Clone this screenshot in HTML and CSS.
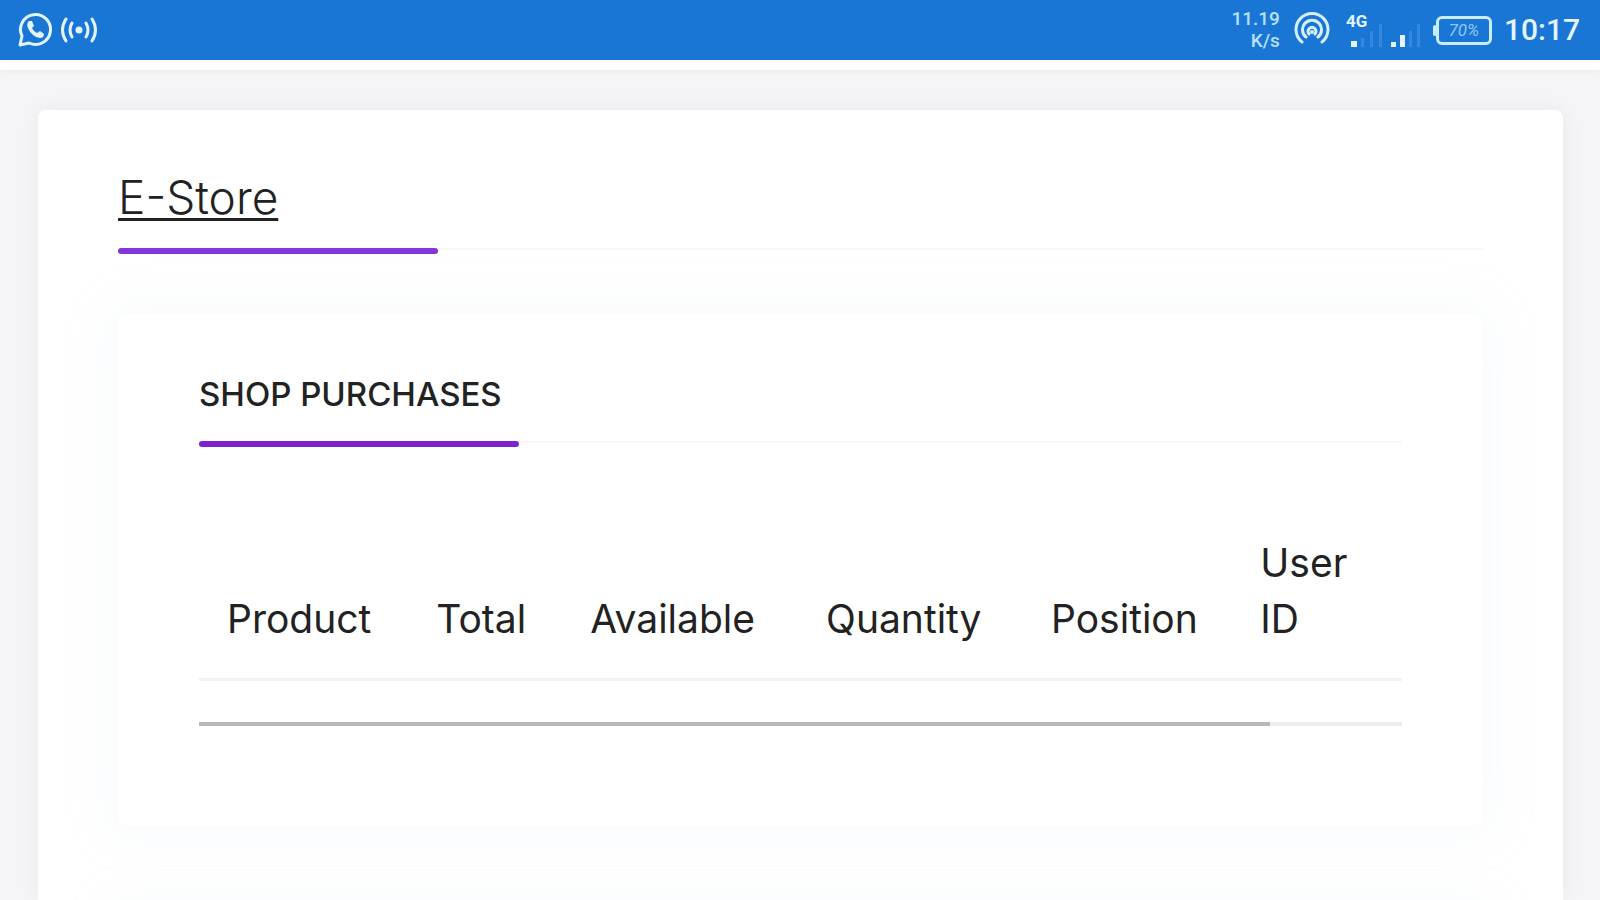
FILE: index.html
```
<!DOCTYPE html>
<html lang="en">
<head>
<meta charset="utf-8">
<meta name="viewport" content="width=device-width, initial-scale=1">
<title>E-Store</title>
<link rel="stylesheet" href="styles.css">
</head>
<body>
<header class="status">
  <div class="status-left">
    <svg width="36" height="36" viewBox="0 0 36 36" fill="none" stroke="#e2f5ff">
      <path d="M2 33 4 24A15 15 0 1 1 11 31Z" stroke-width="3" stroke-linejoin="round"/>
      <path d="M11 9c-2 1-2 5-1 7 2 5 6 9 12 10 2 0 4-1 4-4l-4-3-3 2c-2-1-4-3-5-5l2-2-2-5Z" fill="#e2f5ff" stroke="none"/>
    </svg>
    <svg width="38" height="30" viewBox="0 0 38 30" fill="none" stroke="#e2f5ff" stroke-width="3" stroke-linecap="round">
      <circle cx="19" cy="15" r="3.500" fill="#e2f5ff" stroke="none"/>
      <path d="M12 8q-4 7 0 14M26 8q4 7 0 14M6 4q-7 11 0 22M32 4q7 11 0 22"/>
    </svg>
  </div>
  <div class="status-right">
    <div class="speed"><span>11.19</span><span>K/s</span></div>
    <svg class="hotspot" width="36" height="36" viewBox="0 0 36 36" fill="none" stroke="#d5efff" stroke-width="3" stroke-linecap="round">
      <path d="M8 30a16 16 0 1 1 20 0M12 25a9.500 9.500 0 1 1 12 0"/>
      <path d="M15 22a4 4 0 1 1 6 0" stroke-width="3"/>
      <circle cx="18" cy="20" r="2" fill="#d5efff" stroke="none"/>
    </svg>
    <div class="signals">
      <span class="net">4G</span>
      <svg width="78" height="36" viewBox="0 0 78 36">
        <path d="M5 24h6v6H5zM45 25h5v5h-5zM54 18h5v12h-5z" fill="#e2f5ff"/>
        <path d="M15 21h3v9h-3zM24 14h3v16h-3zM33 7h3v23h-3zM63 14h3v16h-3zM71 7h3v23h-3z" fill="#3488df"/>
      </svg>
    </div>
    <div class="battery">70%</div>
    <time class="clock">10:17</time>
  </div>
</header>
<main class="page">
  <section class="card">
    <h1 class="title"><a href="#">E-Store</a></h1>
    <section class="panel">
      <h2 class="title subtitle">SHOP PURCHASES</h2>
      <table class="purchases">
        <thead>
          <tr><th class="c-product">Product</th><th class="c-total">Total</th><th class="c-available">Available</th><th class="c-quantity">Quantity</th><th class="c-position">Position</th><th class="c-user">User<br>ID</th></tr>
        </thead>
      </table>
      <div class="track"><div class="thumb"></div></div>
    </section>
    <section class="panel"></section>
  </section>
</main>
</body>
</html>
```
FILE: styles.css
```
* { box-sizing: border-box; }
body {
  margin: 0;
  height: 100vh;
  overflow: hidden;
  display: flex;
  flex-direction: column;
  background: #f5f5f8;
  color: #222;
  font-family: Inter, "Open Sans", sans-serif;
}
.status {
  flex: none;
  height: 70px;
  padding: 0 20px 0 18px;
  display: flex;
  align-items: center;
  justify-content: space-between;
  background: #1976d5;
  border-bottom: 10px solid #fff;
  color: #e2f5ff;
  font-family: Roboto, sans-serif;
  box-shadow: 0 1px 4px #0000000d;
}
.status-left { display: flex; align-items: center; gap: 6px; }
.status-right { display: flex; align-items: center; }
.speed {
  display: grid;
  gap: 4px;
  font-size: 19px;
  line-height: 18px;
  font-weight: 500;
  text-align: right;
  color: #b9e0fb;
}
.hotspot { margin-left: 14px; }
.signals { position: relative; display: flex; margin: 12px 12px 0 16px; }
.signals svg { margin-top: -2px; }
.net {
  position: absolute;
  left: 0;
  top: -8px;
  font-size: 17px;
  line-height: 20px;
  font-weight: 700;
}
.battery {
  position: relative;
  width: 56px;
  height: 29px;
  border: 3px solid #c9ecff;
  border-radius: 6px;
  font-size: 17px;
  line-height: 23px;
  font-style: italic;
  text-align: center;
  color: #8fc8f8;
}
.battery::before {
  content: "";
  position: absolute;
  left: -6px;
  top: 6px;
  width: 4px;
  height: 11px;
  border-radius: 2px;
  background: #c9ecff;
}
.clock { margin-left: 12px; font-size: 30px; line-height: 36px; font-weight: 500; }
.page { flex: 1; min-height: 0; padding: 40px 37px 0 38px; }
.card {
  height: 100%;
  overflow: hidden;
  padding: 57px 80px 0;
  background: #fff;
  border-radius: 8px 8px 0 0;
  box-shadow: 0 0 24px #0000000d;
}
.title {
  position: relative;
  margin: 0;
  padding-bottom: 21px;
  border-bottom: 2px solid #f8f8f9;
  font-size: 46px;
  line-height: 60px;
  font-weight: 300;
}
.title::after {
  content: "";
  position: absolute;
  left: 0;
  bottom: -6px;
  width: 320px;
  height: 6px;
  border-radius: 3px;
  background: #8137d8;
}
.title a {
  color: inherit;
  text-decoration-thickness: 3px;
  text-underline-offset: 4px;
}
.panel {
  margin-top: 64px;
  padding: 50px 81px 100px;
  background: #fff;
  border-radius: 8px;
  box-shadow: 0 0 50px #d2e4ee40;
}
.panel + .panel { margin-top: 84px; }
.subtitle { font-size: 33px; line-height: 60px; font-weight: 500; padding-bottom: 17px; }
.subtitle::after { background: #7d22cc; }
.purchases {
  width: 100%;
  margin-top: 84px;
  table-layout: fixed;
  border-collapse: collapse;
}
.purchases th {
  padding: 8px 0 31px 28px;
  border-bottom: 3px solid #f2f2f2;
  font-size: 39px;
  line-height: 56px;
  font-weight: 400;
  text-align: left;
  vertical-align: bottom;
}
.c-product { width: 17.4%; }
.c-total { width: 12.8%; }
.c-available { width: 19.6%; }
.c-quantity { width: 18.7%; }
.c-position { width: 17.4%; }
.track { height: 4px; margin-top: 41px; background: #ededed; }
.thumb { width: 89%; height: 100%; background: #b8b8b8; }
```
